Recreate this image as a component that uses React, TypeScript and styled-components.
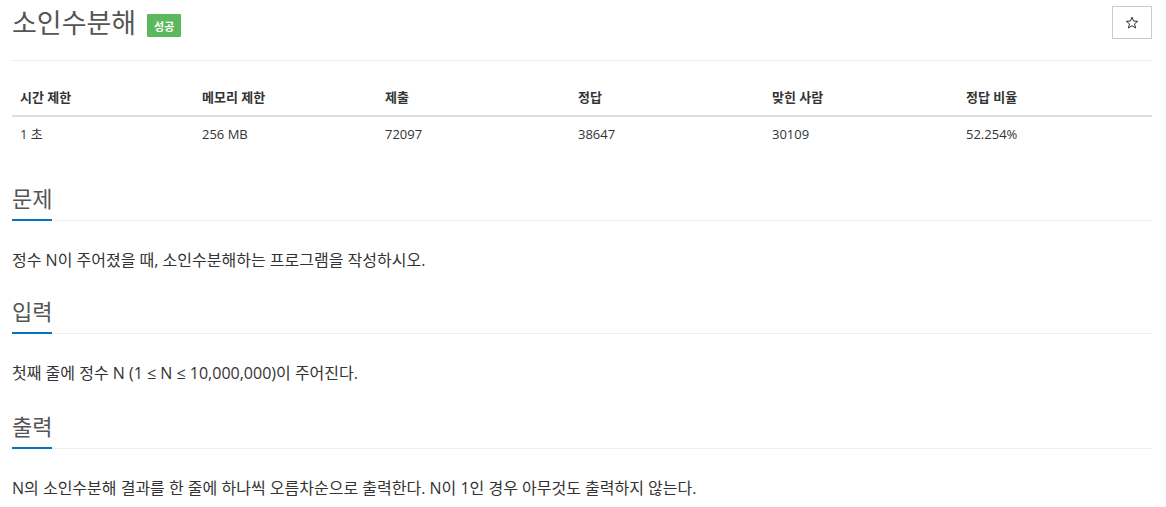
import React from "react";
import styled, { createGlobalStyle } from "styled-components";

const Global = createGlobalStyle`
  html, body { margin: 0; padding: 0; background: #fff; }
  body { font-family: "Open Sans", "Noto Sans CJK KR", sans-serif; color: #333; }
  * { box-sizing: border-box; }
`;

const Page = styled.div`
  width: 1166px;
  padding: 0 14px 0 12px;
`;

const Header = styled.div`
  display: flex;
  justify-content: space-between;
  align-items: flex-start;
  height: 61px;
  border-bottom: 1px solid #eee;
`;

const TitleRow = styled.div`
  display: flex;
  align-items: center;
  gap: 11px;
  margin-top: 4px;
`;

const Title = styled.h1`
  margin: 0;
  font-size: 27px;
  font-weight: 400;
  line-height: 38px;
  color: #555;
`;

const Badge = styled.span`
  display: inline-flex;
  align-items: center;
  justify-content: center;
  width: 34px;
  height: 23px;
  margin-top: 5px;
  background: #5cb85c;
  color: #fff;
  font-size: 11px;
  font-weight: 700;
  border-radius: 1px;
`;

const StarButton = styled.button`
  margin-top: 6px;
  width: 40px;
  height: 33px;
  border: 1px solid #ccc;
  background: #fff;
  display: flex;
  align-items: center;
  justify-content: center;
  padding: 0;
`;

const Table = styled.div`
  margin-top: 19px;
  display: grid;
  grid-template-columns: 182px 183px 193px 194px 194px 194px;
`;

const HeadCell = styled.div`
  height: 37px;
  padding: 0 8px 2px;
  display: flex;
  align-items: center;
  font-size: 13px;
  font-weight: 700;
  color: #333;
  border-bottom: 2px solid #ddd;
`;

const Cell = styled.div`
  height: 33px;
  padding: 0 8px;
  display: flex;
  align-items: center;
  font-size: 13px;
  color: #333;
`;

const Section = styled.section<{ $top: number }>`
  margin-top: ${(p) => p.$top}px;
`;

const Headline = styled.div`
  border-bottom: 1px dotted #e2e2e2;
`;

const H2 = styled.h2`
  display: inline-block;
  margin: 0 0 -1px;
  font-size: 22px;
  font-weight: 400;
  line-height: 30px;
  padding-bottom: 6px;
  color: #555;
  border-bottom: 2px solid #0076c0;
`;

const Text = styled.p`
  margin: 27px 0 0;
  font-size: 16px;
  line-height: 24px;
  color: #333;
`;

const Star = () => (
  <svg width="14" height="14" viewBox="0 0 14 14">
    <path
      d="M7 1.2 L8.6 5.1 L12.7 5.3 L9.5 7.9 L10.6 12 L7 9.7 L3.4 12 L4.5 7.9 L1.3 5.3 L5.4 5.1 Z"
      fill="none"
      stroke="#333"
      strokeWidth="1"
      strokeLinejoin="miter"
    />
  </svg>
);

const heads = ["시간 제한", "메모리 제한", "제출", "정답", "맞힌 사람", "정답 비율"];
const values = ["1 초", "256 MB", "72097", "38647", "30109", "52.254%"];

const sections = [
  { title: "문제", text: "정수 N이 주어졌을 때, 소인수분해하는 프로그램을 작성하시오.", top: 33 },
  { title: "입력", text: "첫째 줄에 정수 N (1 ≤ N ≤ 10,000,000)이 주어진다.", top: 24 },
  { title: "출력", text: "N의 소인수분해 결과를 한 줄에 하나씩 오름차순으로 출력한다. N이 1인 경우 아무것도 출력하지 않는다.", top: 26 },
];

export default function App() {
  return (
    <Page>
      <Global />
      <Header>
        <TitleRow>
          <Title>소인수분해</Title>
          <Badge>성공</Badge>
        </TitleRow>
        <StarButton aria-label="star">
          <Star />
        </StarButton>
      </Header>
      <Table>
        {heads.map((h) => (
          <HeadCell key={h}>{h}</HeadCell>
        ))}
        {values.map((v) => (
          <Cell key={v}>{v}</Cell>
        ))}
      </Table>
      {sections.map((s) => (
        <Section key={s.title} $top={s.top}>
          <Headline>
            <H2>{s.title}</H2>
          </Headline>
          <Text>{s.text}</Text>
        </Section>
      ))}
    </Page>
  );
}
